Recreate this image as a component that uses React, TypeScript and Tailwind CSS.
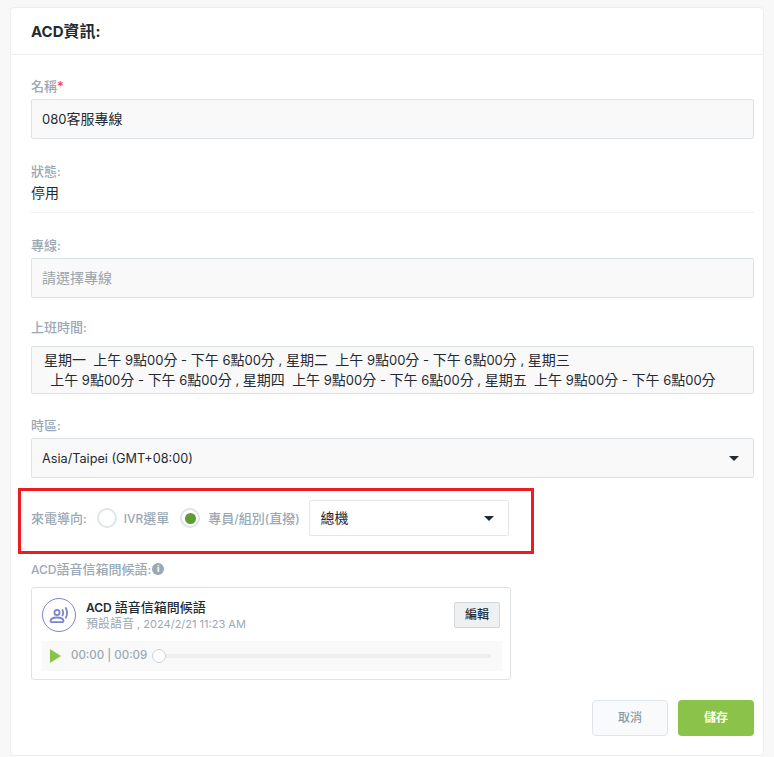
import React from 'react';

const label = 'h-[18px] text-[13px] leading-[18px] text-[#9aa8b4] font-medium';
const field = 'h-10 flex items-center px-[10px] rounded-[2px] border border-[#dde2e6] bg-[#f9f9f9] text-sm';

// latin runs render a size smaller than the CJK around them
function T({ text, latin = 'text-[13px]' }: { text: string; latin?: string }) {
  return (
    <>
      {text.split(/([\x00-\x7f]+)/).map((run, i) =>
        i % 2 ? <span key={i} className={latin}>{run}</span> : run
      )}
    </>
  );
}

function Caret() {
  return <span className="w-0 h-0 border-x-[5px] border-x-transparent border-t-[5px] border-t-[#1f2a33]" />;
}

function Radio({ checked }: { checked?: boolean }) {
  return (
    <span className="w-5 h-5 rounded-full border-2 border-[#dfe4e8] bg-white flex items-center justify-center shrink-0">
      {checked && <span className="w-[11px] h-[11px] rounded-full bg-[#5f9c32]" />}
    </span>
  );
}

export default function App() {
  return (
    <div
      className="w-[774px] h-[757px] overflow-hidden bg-[#f8f8f8] pt-[7px] pl-[10px] text-[#1f2a33]"
      style={{ fontFamily: 'Inter, "Noto Sans CJK TC", sans-serif' }}
    >
      <div className="w-[754px] h-[749px] bg-white rounded-[4px] border border-[#eeeeee]">
        <div className="h-[47px] flex items-center px-5 border-b border-[#eeeeee] text-base font-bold text-[#1f2a33]">
          <span><T text="ACD資訊:" latin="text-[15px]" /></span>
        </div>
        <div className="pl-5 pr-[9px]">
          <div className={`${label} mt-[22px]`}>
            名稱<span className="text-[#ef4444]">*</span>
          </div>
          <div className={`${field} mt-[4px] text-[#1f2a33]`}>
            <span><T text="080客服專線" /></span>
          </div>

          <div className={`${label} mt-[23px]`}><T text="狀態:" latin="text-[12px]" /></div>
          <div className="text-sm leading-5 mt-[3px] pb-[9px] border-b border-[#f0f0f0]">停用</div>

          <div className={`${label} mt-[23px]`}><T text="專線:" latin="text-[12px]" /></div>
          <div className={`${field} mt-[4px] text-[#9aa3aa]`}>請選擇專線</div>

          <div className={`${label} mt-[20px]`}><T text="上班時間:" latin="text-[12px]" /></div>
          <div className="h-12 mt-[10px] px-[12px] pt-[3px] rounded-[2px] border border-[#dde2e6] bg-[#f9f9f9] text-sm leading-5 whitespace-pre">
            <T text={'星期一  上午 9點00分 - 下午 6點00分 , 星期二  上午 9點00分 - 下午 6點00分 , 星期三\n\u2009 上午 9點00分 - 下午 6點00分 , 星期四  上午 9點00分 - 下午 6點00分 , 星期五  上午 9點00分 - 下午 6點00分'} />
          </div>

          <div className={`${label} mt-[22px]`}><T text="時區:" latin="text-[12px]" /></div>
          <div className={`${field} mt-[4px] justify-between pr-[14px]`}>
            <span className="text-[12.7px] pt-[3px]">Asia/Taipei (GMT+08:00)</span>
            <Caret />
          </div>

          <div className="-ml-[13px] mt-[10px] w-[516px] h-[66px] border-[3px] border-[#ed1c24] flex items-center pl-[10px] pb-[6px]">
            <span className={`${label} mr-[10px]`}><T text="來電導向:" latin="text-[12px]" /></span>
            <Radio />
            <span className={`${label} ml-[7px] mr-[11px]`}><T text="IVR選單" latin="text-[12px]" /></span>
            <Radio checked />
            <span className={`${label} ml-[8px] mr-[9px]`}><T text="專員/組別(直撥)" latin="text-[12px]" /></span>
            <div className="w-[200px] h-9 flex items-center justify-between pl-[11px] pr-[14px] rounded-[2px] border border-[#e3e7ea] bg-white text-sm">
              <span>總機</span>
              <Caret />
            </div>
          </div>

          <div className={`${label} mt-[6px] flex items-center gap-[1px]`}>
            <span><T text="ACD語音信箱問候語:" latin="text-[12px]" /></span>
            <span className="w-3 h-3 rounded-full bg-[#9aa8b4] text-white text-[9px] leading-3 text-center font-bold">i</span>
          </div>

          <div className="mt-[9px] w-[480px] h-[93px] rounded-[3px] border border-[#dfe2e5] pl-[10px] pr-2 pt-[10px]">
            <div className="flex h-[43px]">
              <span className="w-[34px] h-[34px] rounded-full border border-[#7c83cf] flex items-center justify-center shrink-0">
                <svg width="24" height="24" viewBox="0 0 24 24" fill="none" stroke="#7c83cf" strokeWidth="1.8" strokeLinecap="round">
                  <circle cx="10" cy="9.5" r="2.6" />
                  <path d="M3.5 18.2c0-2.4 2.8-3.7 6.5-3.7s6.5 1.3 6.5 3.7c0 .6-.4.9-1 .9h-11c-.6 0-1-.3-1-.9z" />
                  <path d="M15.5 7c.9 1.7.9 3.8 0 5.5" />
                  <path d="M18.8 5c1.6 3 1.6 6.8 0 9.8" />
                </svg>
              </span>
              <div className="ml-[10px] mt-[1px] flex-1">
                <div className="h-4 text-[13px] leading-[16px] font-medium text-[#1f2a33]"><T text="ACD 語音信箱問候語" latin="text-[12px] font-semibold" /></div>
                <div className="h-4 mt-[1px] text-xs leading-[16px] text-[#9aa8b4]"><T text="預設語音 , 2024/2/21 11:23 AM" latin="text-[11px]" /></div>
              </div>
              <div className="w-[46px] h-[26px] mt-[4px] mr-[2px] rounded-[2px] border border-[#d3d7da] bg-[#eef0f2] flex items-center justify-center text-xs font-medium">
                編輯
              </div>
            </div>
            <div className="h-[30px] bg-[#f9f9f9] flex items-center pl-2 pr-[11px]">
              <span className="w-0 h-0 border-y-[7px] border-y-transparent border-l-[11px] border-l-[#8bc34a]" />
              <span className="ml-[10px] text-[11.5px] font-medium text-[#9aa8b4]">00:00 | 00:09</span>
              <div className="relative flex-1 ml-[6px] h-1 bg-[#eeeff0]">
                <span className="absolute -left-px -top-[5px] w-[14px] h-[14px] rounded-full border border-[#ccd1d5] bg-white" />
              </div>
            </div>
          </div>

          <div className="mt-5 flex justify-end gap-[10px]">
            <div className="w-[76px] h-9 rounded-[4px] border border-[#dfe4e8] bg-[#f9fafb] flex items-center justify-center text-xs font-medium text-[#8a99a5]">
              取消
            </div>
            <div className="w-[76px] h-9 rounded-[4px] bg-[#8bc34a] flex items-center justify-center text-xs font-semibold text-white">
              儲存
            </div>
          </div>
        </div>
      </div>
    </div>
  );
}
